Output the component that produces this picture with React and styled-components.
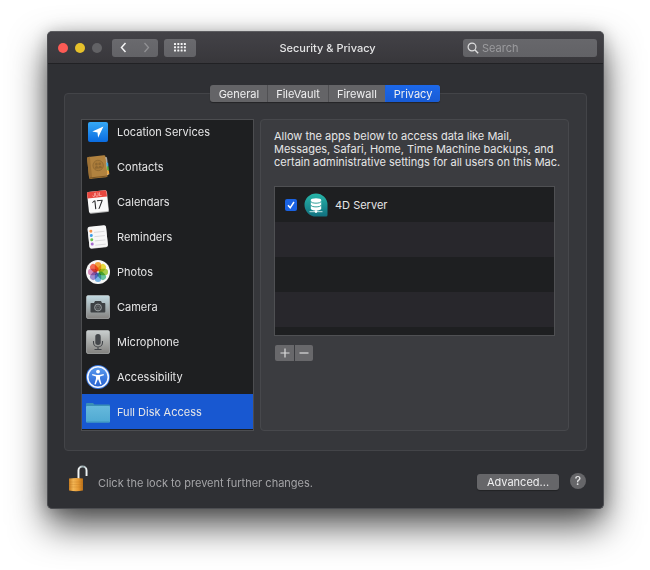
import React, { useState } from "react";
import styled, { createGlobalStyle } from "styled-components";

const GlobalStyle = createGlobalStyle`
  *, *::before, *::after { box-sizing: border-box; }
  body {
    margin: 0;
    background: #fff;
    font-family: Inter, "Liberation Sans", sans-serif;
    font-size: 11px;
    line-height: 14px;
    color: #e6e6e7;
    -webkit-font-smoothing: antialiased;
  }
  button, input { font: inherit; color: inherit; margin: 0; }
  button { border: 0; padding: 0; background: none; }
  svg { display: block; }
  ul { list-style: none; margin: 0; padding: 0; }
`;

const Page = styled.main`
  min-height: 100vh;
  padding: 31px 46px 61px 47px;
`;

const Window = styled.section`
  border: 1px solid #4d4e52;
  border-top-color: #5d5d61;
  border-radius: 5px;
  background: #2f3034;
  box-shadow: 0 17px 36px rgba(0, 0, 0, 0.68), 0 2px 16px rgba(0, 0, 0, 0.22);
`;

const TitleBar = styled.header`
  display: grid;
  grid-template-columns: 1fr auto 1fr;
  align-items: center;
  height: 32px;
  padding: 0 6px 0 10px;
  border-bottom: 1px solid #212124;
  border-radius: 4px 4px 0 0;
  background: linear-gradient(#434247, #38373b);
`;

const TitleLeft = styled.div`
  display: flex;
  align-items: center;
`;

const Lights = styled.div`
  display: flex;
  gap: 7px;
  margin-right: 10px;
`;

const Light = styled.button`
  width: 10px;
  height: 10px;
  border-radius: 50%;
  background: ${(p) => p.$color};
`;

const ToolButton = styled.button`
  display: flex;
  align-items: center;
  justify-content: center;
  width: ${(p) => (p.$wide ? "32px" : "23px")};
  height: 18px;
  margin-left: ${(p) => (p.$wide ? "6px" : "0")};
  border-radius: ${(p) => p.$radius || "3px"};
  background: linear-gradient(#6a6a6e, #636367);
  color: ${(p) => (p.disabled ? "#919194" : "#f4f4f5")};
  & + &:disabled { margin-left: 1px; }
`;

const Title = styled.h1`
  margin: 0;
  font-size: 11px;
  font-weight: 500;
  color: #e4e4e5;
`;

const SearchBox = styled.label`
  display: flex;
  align-items: center;
  justify-self: end;
  gap: 3px;
  width: 134px;
  height: 18px;
  padding: 0 4px;
  border-radius: 3px;
  background: linear-gradient(#67676b, #626266);
  color: #dededf;
  svg { flex: none; }
`;

const SearchInput = styled.input`
  min-width: 0;
  flex: 1;
  padding: 0;
  border: 0;
  outline: 0;
  background: none;
  &::placeholder { color: #9b9b9e; opacity: 1; }
`;

const Body = styled.div`
  padding: 29px 16px 16px;
`;

const Panel = styled.div`
  border: 1px solid #434448;
  border-radius: 4px;
  background: #36373b;
  padding: 0 17px 19px 16px;
`;

const Tabs = styled.div`
  display: flex;
  width: fit-content;
  margin: -9px auto 17px;
  border-radius: 3px;
  background: #646467;
  box-shadow: 0 1px 1px rgba(0, 0, 0, 0.35);
`;

const Tab = styled.button`
  height: 17px;
  padding: 0 8px;
  border-left: 1px solid ${(p) => (p["aria-selected"] ? "#1a61df" : "#505053")};
  background: ${(p) => (p["aria-selected"] ? "linear-gradient(#1c68ea, #185bd4)" : "transparent")};
  color: #f0f0f1;
  &:first-child { border-left-color: transparent; border-radius: 3px 0 0 3px; }
  &:last-child { border-radius: 0 3px 3px 0; }
`;

const Columns = styled.div`
  display: flex;
  align-items: stretch;
  gap: 6px;
`;

const Sidebar = styled.nav`
  display: flex;
  flex-direction: column;
  justify-content: flex-end;
  flex: none;
  width: 173px;
  height: 312px;
  padding-bottom: 1px;
  border: 1px solid #4c4d50;
  background: #1e1f21;
  overflow: hidden;
`;

const Category = styled.button`
  display: flex;
  flex: none;
  align-items: center;
  gap: 7px;
  height: 35px;
  padding: 0 4px;
  text-align: left;
  background: ${(p) => (p["aria-current"] ? "#1858d1" : "transparent")};
  svg { flex: none; }
`;

const Detail = styled.section`
  flex: 1;
  min-width: 0;
  padding: 10px 13px 14px;
  border: 1px solid #47484c;
  border-radius: 4px;
  background: #3b3c40;
`;

const Description = styled.p`
  margin: 0 0 17px;
  line-height: 13px;
  white-space: nowrap;
`;

const AppList = styled.ul`
  height: 150px;
  border: 1px solid #4f5053;
  background: repeating-linear-gradient(#1e1f21 0 35px, #28272c 35px 70px);
`;

const AppRow = styled.li`
  height: 35px;
  padding: 0 10px;
`;

const AppLabel = styled.label`
  display: flex;
  align-items: center;
  gap: 7px;
  height: 100%;
`;

const CheckWrap = styled.span`
  position: relative;
  width: 12px;
  height: 12px;
  svg { position: absolute; inset: 0; pointer-events: none; }
`;

const Checkbox = styled.input`
  appearance: none;
  display: block;
  width: 12px;
  height: 12px;
  border-radius: 2px;
  background: #646467;
  &:checked { background: #1a62e2; }
`;

const EditButtons = styled.div`
  display: flex;
  gap: 1px;
  margin: 9px 0 0 1px;
`;

const EditButton = styled.button`
  display: flex;
  align-items: center;
  justify-content: center;
  width: ${(p) => (p.$last ? "18px" : "19px")};
  height: 16px;
  border-radius: ${(p) => (p.$last ? "0 2px 2px 0" : "2px 0 0 2px")};
  background: #68686b;
`;

const Footer = styled.footer`
  display: flex;
  align-items: center;
  margin-top: 14px;
  padding: 0 1px 0 4px;
`;

const LockNote = styled.span`
  flex: 1;
  margin-left: 10px;
  padding-top: 8px;
  color: #a4a4a7;
`;

const PushButton = styled.button`
  width: 82px;
  height: 16px;
  margin-top: 6px;
  border-radius: 3px;
  background: #666669;
  color: #f0f0f1;
  box-shadow: 0 1px 1px rgba(0, 0, 0, 0.3);
`;

const HelpButton = styled.button`
  width: 16px;
  height: 16px;
  margin: 5px 0 0 11px;
  border-radius: 50%;
  background: #666669;
  font-weight: 500;
  font-size: 12px;
`;

const icon = { width: 24, height: 26, viewBox: "0 0 24 26", "aria-hidden": true };

const LocationIcon = () => (
  <svg {...icon}>
    <defs>
      <linearGradient id="loc" x2="0" y2="1"><stop stopColor="#35a9f7" /><stop offset="1" stopColor="#0a6be0" /></linearGradient>
    </defs>
    <rect x="2" y="3" width="20" height="20" rx="2" fill="url(#loc)" />
    <path d="M17.400 7.400 6.300 12.600l5.200.8.6 5.400z" fill="#fff" />
  </svg>
);

const ContactsIcon = () => (
  <svg {...icon}>
    <g transform="rotate(-6 12 13)">
      <path d="M20 4h1.500v18H20z" fill="#e9e9e6" />
      <path d="M20.500 5.500H22v4h-1.500z" fill="#a9a9a9" />
      <path d="M20.500 9.500H22.500v4h-2z" fill="#3ea7e2" />
      <path d="M20.500 13.500h2v4h-2z" fill="#58b947" />
      <path d="M20.500 17.500h2v4h-2z" fill="#f0a63c" />
      <rect x="2" y="2" width="18.500" height="22" rx="1.500" fill="#b1823f" />
      <path d="M2 3.500A1.500 1.500 0 0 1 3.500 2H5v22H3.500A1.500 1.500 0 0 1 2 22.500z" fill="#9d7135" />
      <path d="M2.500 23h18" stroke="#7c5624" />
      <circle cx="12.300" cy="11.500" r="5.200" fill="#a97b3a" stroke="#8f6831" strokeWidth=".8" />
      <circle cx="10.700" cy="10" r="1.300" fill="#8f6831" />
      <circle cx="14" cy="10" r="1.300" fill="#8f6831" />
      <path d="M8.700 14.500c0-3.500 3.600-3.500 3.600 0 0-3.500 3.600-3.500 3.600 0z" fill="#8f6831" />
    </g>
  </svg>
);

const CalendarIcon = () => (
  <svg {...icon}>
    <g transform="rotate(-6 12 13)">
      <rect x="2.500" y="3" width="19.500" height="21" rx="1.500" fill="#b8b8b8" />
      <rect x="2" y="2" width="19.500" height="21" rx="1.500" fill="#fafafa" />
      <path d="M2 3.500A1.500 1.500 0 0 1 3.500 2H20a1.500 1.500 0 0 1 1.500 1.500V8.500H2z" fill="#e8473f" />
      <text x="11.800" y="7.200" textAnchor="middle" fontSize="5" fill="#ffd9d4" fontFamily="Inter, sans-serif">JUL</text>
      <text x="11.500" y="20" textAnchor="middle" fontSize="12" fill="#29292b" fontFamily="Inter, sans-serif">17</text>
    </g>
  </svg>
);

const RemindersIcon = () => (
  <svg {...icon}>
    <g transform="rotate(-6 12 13)">
      <rect x="2.500" y="2.500" width="18.500" height="21.500" rx="2" fill="#c9c9c9" />
      <rect x="2.500" y="2" width="18.500" height="21.500" rx="2" fill="#f7f7f7" />
      {["#f2924a", "#3e9ee8", "#68c24d", "#a56bd0"].map((c, i) => (
        <g key={c}>
          <circle cx="5.500" cy={6.5 + i * 4.3} r="1.500" fill={c} />
          <path d={`M8.500 ${8 + i * 4.3}H19`} stroke="#cfcfd2" strokeWidth=".7" />
        </g>
      ))}
    </g>
  </svg>
);

const petals = ["#f9a02b", "#ecdc2c", "#a3d03c", "#5cc49a", "#6fb2ea", "#9a86d2", "#d884b8", "#f75e46"];
const PhotosIcon = () => (
  <svg {...icon}>
    <circle cx="12" cy="13" r="12" fill="#f7f7f7" />
    {petals.map((c, i) => (
      <rect key={c} x="8.800" y="3" width="6.400" height="9.200" rx="3.200" fill={c} fillOpacity=".9"
        transform={`rotate(${i * 45} 12 13)`} style={{ mixBlendMode: "multiply" }} />
    ))}
  </svg>
);

const Plate = ({ id, top, bottom, children }) => (
  <svg {...icon}>
    <defs>
      <linearGradient id={id} x2="0" y2="1"><stop stopColor={top} /><stop offset="1" stopColor={bottom} /></linearGradient>
    </defs>
    <rect x=".500" y="1.500" width="23" height="23" rx="1.500" fill={`url(#${id})`} stroke="#d5d9da" strokeOpacity=".5" />
    {children}
  </svg>
);

const CameraIcon = () => (
  <Plate id="cam" top="#c3dbe3" bottom="#858381">
    <path d="M5 9h3l1-2h6l1 2h2.500a.8.8 0 0 1 .8.8v8a.8.8 0 0 1-.8.8H5.300a.8.8 0 0 1-.8-.8V9.500z" fill="#3d4144" />
    <circle cx="12" cy="13.500" r="3.400" fill="#45494b" stroke="#a4a9ab" strokeWidth=".9" />
    <circle cx="12" cy="13.500" r="1.600" fill="none" stroke="#75797b" strokeWidth=".7" />
  </Plate>
);

const MicIcon = () => (
  <Plate id="mic" top="#c9cece" bottom="#83827f">
    <rect x="9.300" y="5" width="5.400" height="11" rx="2.700" fill="#43464a" />
    <path d="M7.500 12v1.500a4.500 4.500 0 0 0 9 0V12M12 18v2.300M8.500 20.500h7" fill="none" stroke="#43464a" strokeWidth="1.100" />
  </Plate>
);

const AccessibilityIcon = () => (
  <svg {...icon}>
    <defs>
      <linearGradient id="acc" x2="0" y2="1"><stop stopColor="#5a9bf0" /><stop offset="1" stopColor="#2560cf" /></linearGradient>
    </defs>
    <circle cx="12" cy="13" r="12" fill="#3573dc" />
    <circle cx="12" cy="13" r="10.300" fill="url(#acc)" stroke="#f4f7fd" strokeWidth="1.600" />
    <circle cx="12" cy="7.600" r="1.900" fill="#fff" />
    <path d="m6.300 10 4.400.9h2.600l4.400-.9.200 1.200-3.900 1.200v2.300l1.600 5.500-1.300.4-2-5.200h-.6l-2 5.200-1.300-.4 1.600-5.500v-2.300l-3.900-1.200z" fill="#fff" />
  </svg>
);

const FolderIcon = () => (
  <svg {...icon}>
    <defs>
      <linearGradient id="fold" x2="0" y2="1"><stop stopColor="#66b9dc" /><stop offset="1" stopColor="#4fa9d2" /></linearGradient>
    </defs>
    <path d="M0 5a1 1 0 0 1 1-1h6l1.500 1.500H23a1 1 0 0 1 1 1V10H0z" fill="#3a8fb6" />
    <rect y="7" width="24" height="16.500" rx="1" fill="url(#fold)" />
    <path d="M.5 23h23" stroke="#3b93bd" />
  </svg>
);

const ServerIcon = () => (
  <svg width="24" height="24" viewBox="0 0 24 24" aria-hidden>
    <defs>
      <linearGradient id="srv" x2="0" y2="1"><stop stopColor="#27b6a9" /><stop offset="1" stopColor="#11707f" /></linearGradient>
    </defs>
    <path d="M12 .500a11.500 11.500 0 0 1 11.500 11.500v10a1.500 1.500 0 0 1-1.500 1.500H12A11.500 11.500 0 0 1 12 .500z" fill="url(#srv)" />
    <path d="M6.800 7.200v8.200c0 2.700 10.400 2.700 10.400 0V7.200z" fill="#fff" />
    <ellipse cx="12" cy="7.200" rx="5.200" ry="1.900" fill="#fff" />
    <path d="M6.800 8.300c0 2.500 10.400 2.500 10.400 0M6.800 12c0 2.500 10.400 2.500 10.400 0" fill="none" stroke="#1b948f" strokeWidth=".9" />
    <path d="M5.500 18.700h13M12 17v1" stroke="#d9f1f0" strokeWidth=".9" />
    <circle cx="12" cy="18.600" r="1.300" fill="#fff" />
  </svg>
);

const LockIcon = () => (
  <svg width="20" height="27" viewBox="0 0 20 27" aria-hidden>
    <defs>
      <linearGradient id="brass"><stop stopColor="#c87d20" /><stop offset=".3" stopColor="#f3b655" /><stop offset=".65" stopColor="#e79b35" /><stop offset="1" stopColor="#b96f17" /></linearGradient>
      <linearGradient id="steel"><stop stopColor="#f4f6f6" /><stop offset=".6" stopColor="#8fa3a8" /><stop offset="1" stopColor="#eef3f4" /></linearGradient>
    </defs>
    <path d="M10.500 14V5.500a4 4 0 0 1 8 0V11" fill="none" stroke="url(#steel)" strokeWidth="2" />
    <path d="M1 13.500q7-1 14 0v12q-7 1.500-14 0z" fill="url(#brass)" />
    <path d="M1 17h14M1 19.500h14M1 22h14" stroke="#b87422" strokeOpacity=".4" strokeWidth=".6" />
  </svg>
);

const categories = [
  ["Location Services", LocationIcon],
  ["Contacts", ContactsIcon],
  ["Calendars", CalendarIcon],
  ["Reminders", RemindersIcon],
  ["Photos", PhotosIcon],
  ["Camera", CameraIcon],
  ["Microphone", MicIcon],
  ["Accessibility", AccessibilityIcon],
  ["Full Disk Access", FolderIcon],
];

const tabs = ["General", "FileVault", "Firewall", "Privacy"];

export default function App() {
  const [tab, setTab] = useState("Privacy");
  const [category, setCategory] = useState("Full Disk Access");
  return (
    <>
      <GlobalStyle />
      <Page>
        <Window>
          <TitleBar>
            <TitleLeft>
              <Lights>
                <Light $color="#fc5b55" aria-label="Close" />
                <Light $color="#e6c12b" aria-label="Minimize" />
                <Light $color="#626265" aria-label="Zoom" disabled />
              </Lights>
              <ToolButton $radius="3px 0 0 3px" aria-label="Back">
                <svg width="7" height="11" viewBox="0 0 7 11"><path d="M5.500 1 1.500 5.500l4 4.500" fill="none" stroke="currentColor" strokeWidth="1.500" /></svg>
              </ToolButton>
              <ToolButton $radius="0 3px 3px 0" aria-label="Forward" disabled>
                <svg width="7" height="11" viewBox="0 0 7 11"><path d="m1.500 1 4 4.500-4 4.500" fill="none" stroke="currentColor" strokeWidth="1.300" /></svg>
              </ToolButton>
              <ToolButton $wide aria-label="Show all">
                <svg width="12" height="9" viewBox="0 0 12 9" fill="currentColor">
                  {[0, 1, 2].map((r) => [0, 1, 2, 3].map((c) => (
                    <rect key={`${r}${c}`} x={c * 3.3} y={r * 3.3} width="2" height="2" rx=".5" />
                  )))}
                </svg>
              </ToolButton>
            </TitleLeft>
            <Title>Security &amp; Privacy</Title>
            <SearchBox>
              <svg width="12" height="12" viewBox="0 0 12 12" aria-hidden><circle cx="5" cy="5" r="3.900" fill="none" stroke="currentColor" strokeWidth="1.200" /><path d="m8 8 3.200 3.200" stroke="currentColor" strokeWidth="1.400" /></svg>
              <SearchInput type="text" placeholder="Search" aria-label="Search" />
            </SearchBox>
          </TitleBar>
          <Body>
            <Panel>
              <Tabs role="tablist">
                {tabs.map((t) => (
                  <Tab key={t} role="tab" aria-selected={t === tab} onClick={() => setTab(t)}>{t}</Tab>
                ))}
              </Tabs>
              <Columns>
                <Sidebar aria-label="Privacy categories">
                  {categories.map(([name, Icon]) => (
                    <Category key={name} aria-current={name === category ? "true" : undefined} onClick={() => setCategory(name)}>
                      <Icon />
                      {name}
                    </Category>
                  ))}
                </Sidebar>
                <Detail>
                  <Description>
                    Allow the apps below to access data like Mail,<br />
                    Messages, Safari, Home, Time Machine backups, and<br />
                    certain administrative settings for all users on this Mac.
                  </Description>
                  <AppList>
                    <AppRow>
                      <AppLabel>
                        <CheckWrap>
                          <Checkbox type="checkbox" defaultChecked />
                          <svg width="12" height="12" viewBox="0 0 12 12" aria-hidden><path d="m3 6.300 2.200 2.500L9 3" fill="none" stroke="#fff" strokeWidth="1.500" /></svg>
                        </CheckWrap>
                        <ServerIcon />
                        4D Server
                      </AppLabel>
                    </AppRow>
                  </AppList>
                  <EditButtons>
                    <EditButton aria-label="Add">
                      <svg width="10" height="10" viewBox="0 0 10 10"><path d="M5 .500v9M.500 5h9" stroke="#dcdcdd" strokeWidth="1.200" /></svg>
                    </EditButton>
                    <EditButton $last aria-label="Remove">
                      <svg width="10" height="10" viewBox="0 0 10 10"><path d="M.500 5h9" stroke="#dcdcdd" strokeWidth="1.200" /></svg>
                    </EditButton>
                  </EditButtons>
                </Detail>
              </Columns>
            </Panel>
            <Footer>
              <button aria-label="Lock"><LockIcon /></button>
              <LockNote>Click the lock to prevent further changes.</LockNote>
              <PushButton>Advanced...</PushButton>
              <HelpButton aria-label="Help">?</HelpButton>
            </Footer>
          </Body>
        </Window>
      </Page>
    </>
  );
}
